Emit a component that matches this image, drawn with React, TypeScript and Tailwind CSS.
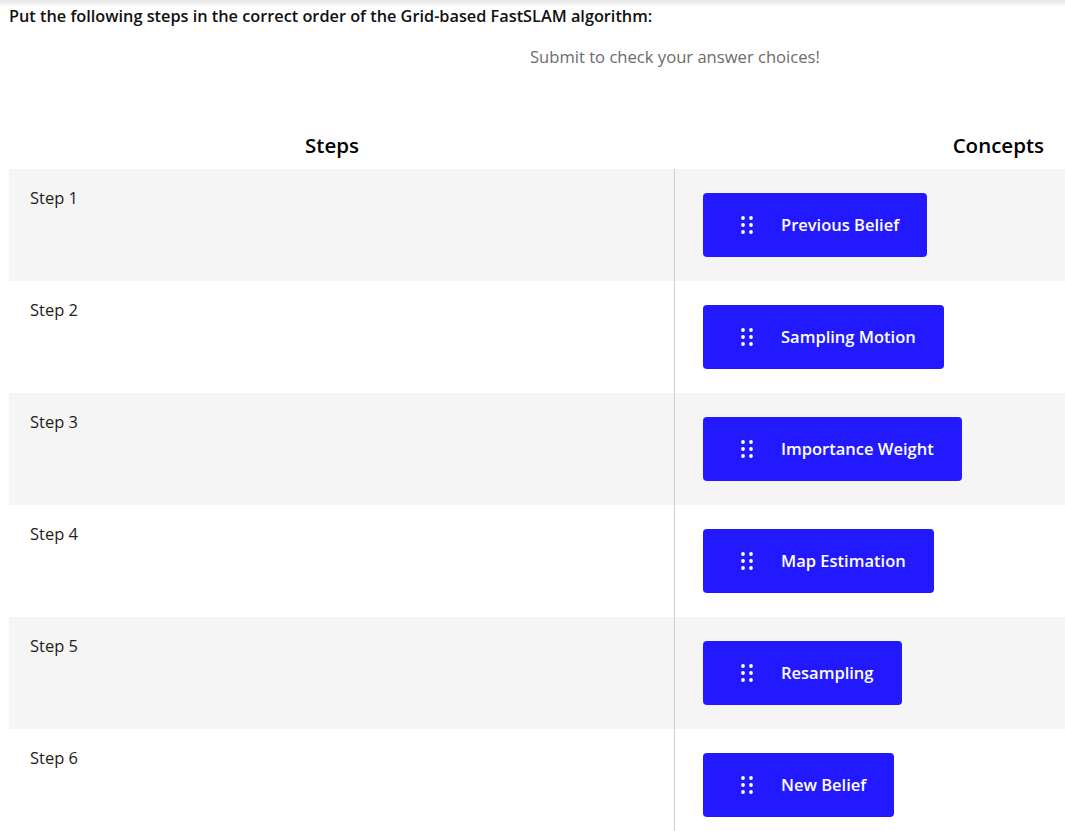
import React from "react";

const concepts = [
  "Previous Belief",
  "Sampling Motion",
  "Importance Weight",
  "Map Estimation",
  "Resampling",
  "New Belief",
];

function Dots() {
  return (
    <svg width="12" height="20" viewBox="0 0 12 20" className="shrink-0">
      {[0, 1, 2].map((r) =>
        [0, 1].map((c) => (
          <circle key={`${r}-${c}`} cx={2 + c * 8} cy={3 + r * 7} r={1.9} fill="#ffffff" />
        ))
      )}
    </svg>
  );
}

export default function App() {
  return (
    <div
      className="relative min-h-[831px] bg-white text-[#1a1a1a]"
      style={{ fontFamily: '"Open Sans", "Noto Sans", sans-serif' }}
    >
      <div className="absolute left-0 right-0 top-0 h-[7px] bg-gradient-to-b from-[#e4e4e4] to-white" />
      <div className="relative pl-[9px] pt-[5px]">
        <p className="text-[16.3px] font-semibold leading-[22px] text-[#111]">
          Put the following steps in the correct order of the Grid-based FastSLAM algorithm:
        </p>
        <p className="mt-[18px] pl-[521px] text-[16.6px] leading-[24px] text-[#6b6b6b]">
          Submit to check your answer choices!
        </p>
        <div className="mt-[58px] flex h-[42px] items-start">
          <div className="w-[666px] pr-[20px] pt-[4px] text-center text-[20.5px] font-semibold leading-[28px] text-black">
            Steps
          </div>
          <div className="flex-1 pr-[21px] pt-[4px] text-right text-[20.5px] font-semibold leading-[28px] text-black">
            Concepts
          </div>
        </div>
        <div className="flex flex-col">
          {concepts.map((c, i) => (
            <div
              key={c}
              className={`flex h-[112px] ${i % 2 === 0 ? "bg-[#f5f5f5]" : "bg-white"}`}
            >
              <div className="w-[666px] border-r border-[#cfcfcf] pl-[21px] pt-[17px] text-[16.5px] leading-[24px] text-[#222]">
                Step {i + 1}
              </div>
              <div className="flex-1 pl-[28px] pt-[24px]">
                <div className="inline-flex h-[64px] items-center rounded-[4px] bg-[#2219ff] pl-[38px] pr-[28px] text-[16.5px] font-semibold text-white">
                  <Dots />
                  <span className="ml-[28px]">{c}</span>
                </div>
              </div>
            </div>
          ))}
        </div>
      </div>
    </div>
  );
}
